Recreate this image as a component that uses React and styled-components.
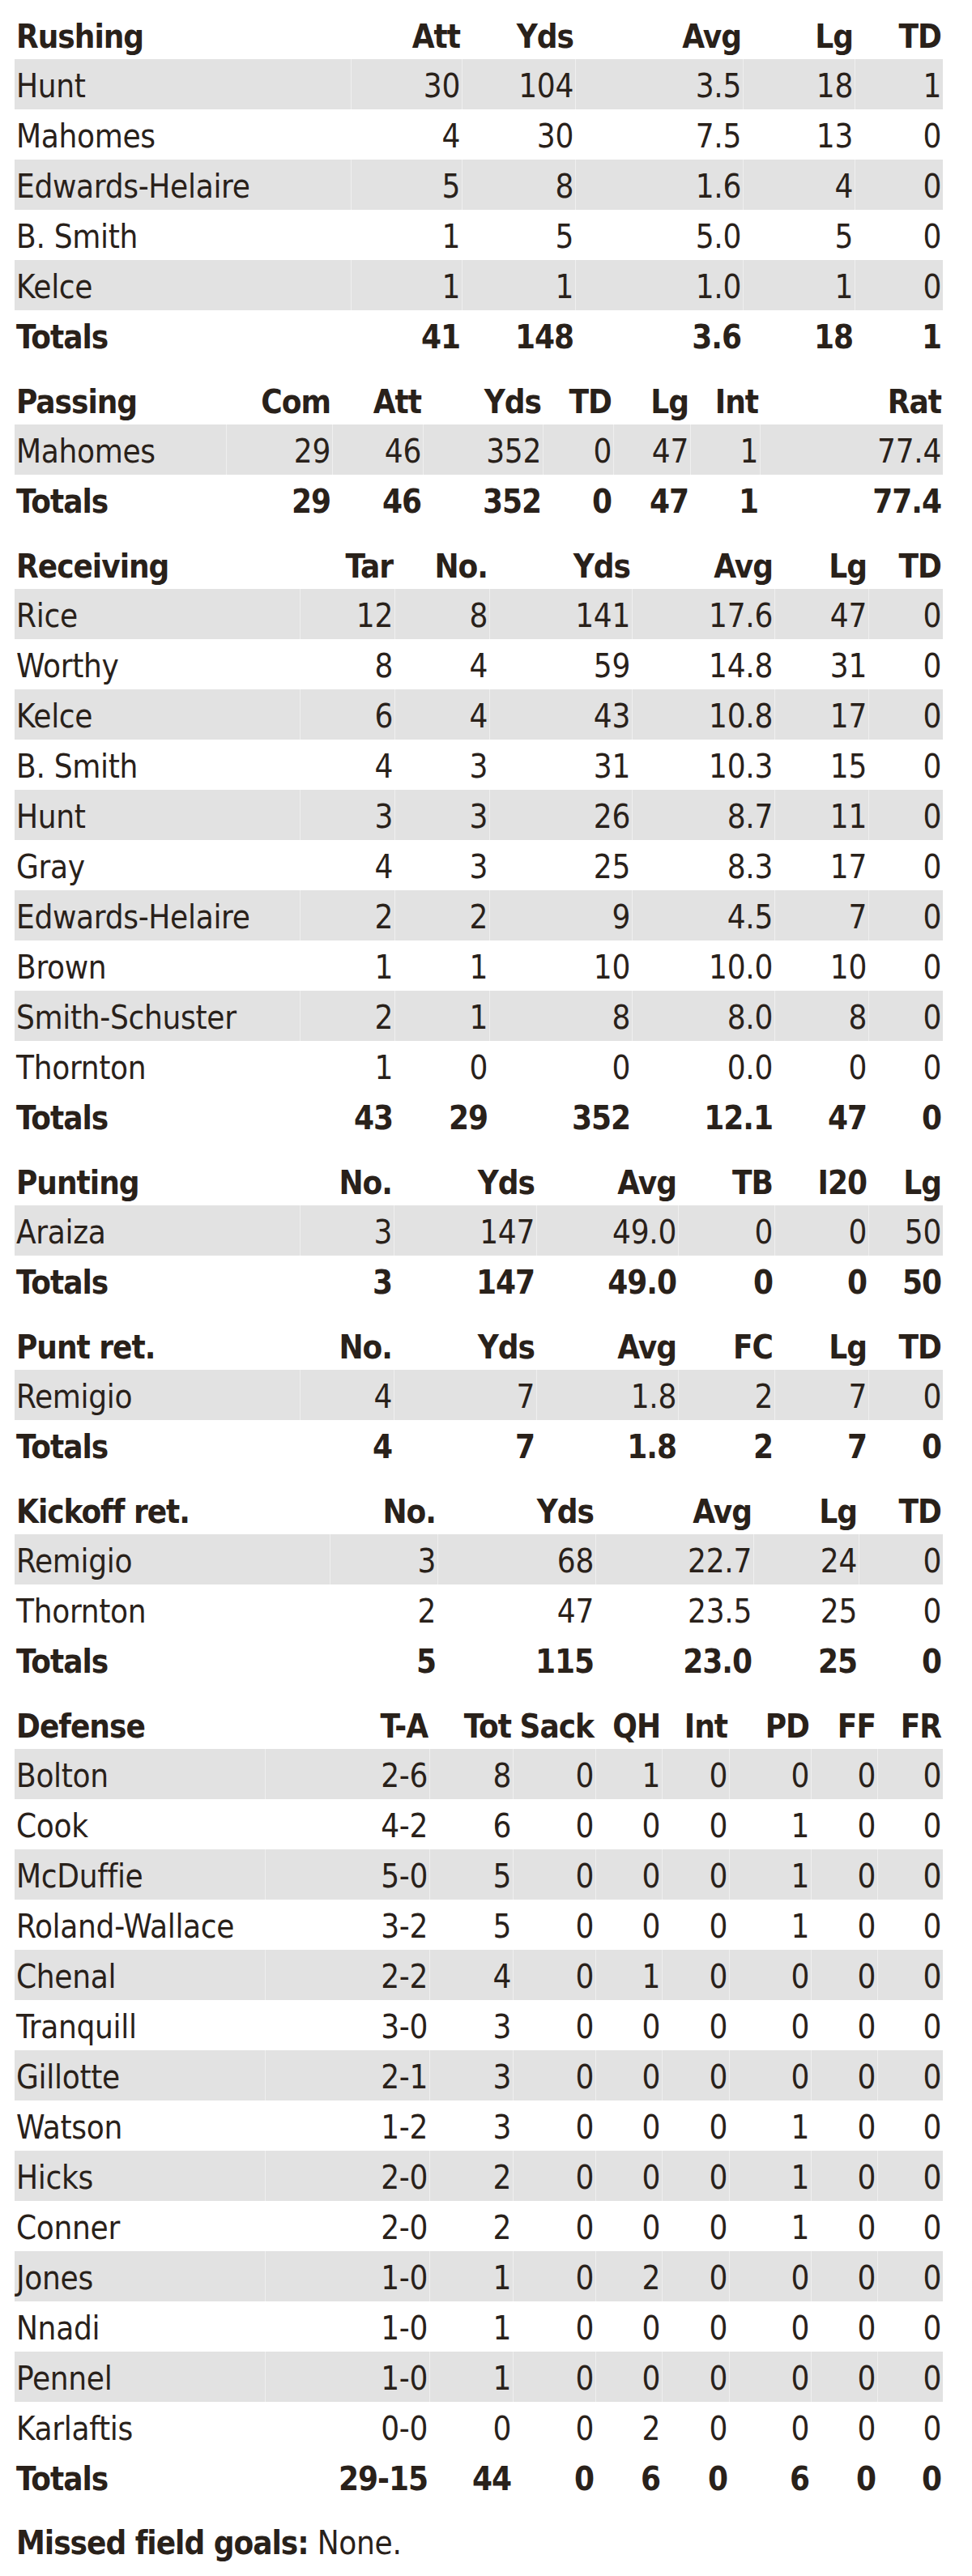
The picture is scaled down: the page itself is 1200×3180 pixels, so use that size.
import React from "react";
import styled, { createGlobalStyle } from "styled-components";

const sections = [
  {
    title: "Rushing",
    cols: ["Att", "Yds", "Avg", "Lg", "TD"],
    widths: [415, 137, 140, 207, 138, 109],
    rows: [
      ["Hunt", "30", "104", "3.5", "18", "1"],
      ["Mahomes", "4", "30", "7.5", "13", "0"],
      ["Edwards-Helaire", "5", "8", "1.6", "4", "0"],
      ["B. Smith", "1", "5", "5.0", "5", "0"],
      ["Kelce", "1", "1", "1.0", "1", "0"],
    ],
    totals: ["Totals", "41", "148", "3.6", "18", "1"],
  },
  {
    title: "Passing",
    cols: ["Com", "Att", "Yds", "TD", "Lg", "Int", "Rat"],
    widths: [261, 131, 112, 148, 87, 95, 86, 226],
    rows: [["Mahomes", "29", "46", "352", "0", "47", "1", "77.4"]],
    totals: ["Totals", "29", "46", "352", "0", "47", "1", "77.4"],
  },
  {
    title: "Receiving",
    cols: ["Tar", "No.", "Yds", "Avg", "Lg", "TD"],
    widths: [352, 117, 117, 176, 176, 116, 92],
    rows: [
      ["Rice", "12", "8", "141", "17.6", "47", "0"],
      ["Worthy", "8", "4", "59", "14.8", "31", "0"],
      ["Kelce", "6", "4", "43", "10.8", "17", "0"],
      ["B. Smith", "4", "3", "31", "10.3", "15", "0"],
      ["Hunt", "3", "3", "26", "8.7", "11", "0"],
      ["Gray", "4", "3", "25", "8.3", "17", "0"],
      ["Edwards-Helaire", "2", "2", "9", "4.5", "7", "0"],
      ["Brown", "1", "1", "10", "10.0", "10", "0"],
      ["Smith-Schuster", "2", "1", "8", "8.0", "8", "0"],
      ["Thornton", "1", "0", "0", "0.0", "0", "0"],
    ],
    totals: ["Totals", "43", "29", "352", "12.1", "47", "0"],
  },
  {
    title: "Punting",
    cols: ["No.", "Yds", "Avg", "TB", "I20", "Lg"],
    widths: [352, 116, 176, 175, 119, 116, 92],
    rows: [["Araiza", "3", "147", "49.0", "0", "0", "50"]],
    totals: ["Totals", "3", "147", "49.0", "0", "0", "50"],
  },
  {
    title: "Punt ret.",
    cols: ["No.", "Yds", "Avg", "FC", "Lg", "TD"],
    widths: [352, 116, 176, 175, 119, 116, 92],
    rows: [["Remigio", "4", "7", "1.8", "2", "7", "0"]],
    totals: ["Totals", "4", "7", "1.8", "2", "7", "0"],
  },
  {
    title: "Kickoff ret.",
    cols: ["No.", "Yds", "Avg", "Lg", "TD"],
    widths: [389, 133, 195, 195, 130, 104],
    rows: [
      ["Remigio", "3", "68", "22.7", "24", "0"],
      ["Thornton", "2", "47", "23.5", "25", "0"],
    ],
    totals: ["Totals", "5", "115", "23.0", "25", "0"],
  },
  {
    title: "Defense",
    cols: ["T-A", "Tot", "Sack", "QH", "Int", "PD", "FF", "FR"],
    widths: [309, 203, 103, 102, 82, 83, 101, 82, 81],
    rows: [
      ["Bolton", "2-6", "8", "0", "1", "0", "0", "0", "0"],
      ["Cook", "4-2", "6", "0", "0", "0", "1", "0", "0"],
      ["McDuffie", "5-0", "5", "0", "0", "0", "1", "0", "0"],
      ["Roland-Wallace", "3-2", "5", "0", "0", "0", "1", "0", "0"],
      ["Chenal", "2-2", "4", "0", "1", "0", "0", "0", "0"],
      ["Tranquill", "3-0", "3", "0", "0", "0", "0", "0", "0"],
      ["Gillotte", "2-1", "3", "0", "0", "0", "0", "0", "0"],
      ["Watson", "1-2", "3", "0", "0", "0", "1", "0", "0"],
      ["Hicks", "2-0", "2", "0", "0", "0", "1", "0", "0"],
      ["Conner", "2-0", "2", "0", "0", "0", "1", "0", "0"],
      ["Jones", "1-0", "1", "0", "2", "0", "0", "0", "0"],
      ["Nnadi", "1-0", "1", "0", "0", "0", "0", "0", "0"],
      ["Pennel", "1-0", "1", "0", "0", "0", "0", "0", "0"],
      ["Karlaftis", "0-0", "0", "0", "2", "0", "0", "0", "0"],
    ],
    totals: ["Totals", "29-15", "44", "0", "6", "0", "6", "0", "0"],
  },
];

export default function App() {
  return (
    <>
      <GlobalStyle />
      <Page>
        {sections.map((s) => (
          <StatTable key={s.title}>
            <colgroup>
              {s.widths.map((w, i) => (
                <Col key={i} $w={w} />
              ))}
            </colgroup>
            <thead>
              <tr>
                <HeadCell>{s.title}</HeadCell>
                {s.cols.map((c) => (
                  <HeadCell key={c} $num>
                    {c}
                  </HeadCell>
                ))}
              </tr>
            </thead>
            <tbody>
              {s.rows.map((r, ri) => (
                <Row key={ri} $shaded={ri % 2 === 0}>
                  {r.map((v, ci) => (
                    <Cell key={ci} $num={ci > 0}>
                      {v}
                    </Cell>
                  ))}
                </Row>
              ))}
            </tbody>
            <tfoot>
              <Row>
                {s.totals.map((v, ci) => (
                  <Cell key={ci} $num={ci > 0} $bold>
                    {v}
                  </Cell>
                ))}
              </Row>
            </tfoot>
          </StatTable>
        ))}
        <Note>
          <strong>Missed field goals:</strong> None.
        </Note>
      </Page>
    </>
  );
}

const GlobalStyle = createGlobalStyle`
  html, body {
    margin: 0;
    padding: 0;
    background: #ffffff;
  }
  body {
    font-family: "DejaVu Sans Condensed", "DejaVu Sans", "Liberation Sans", sans-serif;
    font-stretch: condensed;
    color: #29211a;
  }
`;

const Page = styled.div`
  width: 1146px;
  padding: 11px 36px 12px 18px;
  display: flex;
  flex-direction: column;
  gap: 17px;
`;

const StatTable = styled.table`
  width: 1146px;
  table-layout: fixed;
  border-collapse: collapse;
  border-spacing: 0;
`;

const Col = styled.col`
  width: ${(p) => p.$w}px;
`;

const HeadCell = styled.th`
  height: 62px;
  box-sizing: border-box;
  padding: 7px 2px 0 2px;
  font-size: 40px;
  line-height: 55px;
  font-weight: 700;
  letter-spacing: -1px;
  text-align: ${(p) => (p.$num ? "right" : "left")};
  white-space: nowrap;
  vertical-align: top;
`;

const Row = styled.tr`
  background: ${(p) => (p.$shaded ? "#e2e2e2" : "transparent")};

  td + td {
    box-shadow: ${(p) =>
      p.$shaded ? "inset 1px 0 0 rgba(255, 255, 255, 0.45)" : "none"};
  }
`;

const Cell = styled.td`
  height: 62px;
  box-sizing: border-box;
  padding: 4px 2px 0 2px;
  font-size: 40px;
  line-height: 58px;
  font-weight: ${(p) => (p.$bold ? 700 : 400)};
  letter-spacing: ${(p) => (p.$bold ? "-1px" : "-0.3px")};
  text-align: ${(p) => (p.$num ? "right" : "left")};
  white-space: nowrap;
  vertical-align: top;
`;

const Note = styled.p`
  margin: 0;
  height: 62px;
  box-sizing: border-box;
  padding: 4px 2px 0 2px;
  font-size: 40px;
  line-height: 58px;
  letter-spacing: -0.3px;
  white-space: nowrap;

  strong {
    font-weight: 700;
    letter-spacing: -1px;
  }
`;
